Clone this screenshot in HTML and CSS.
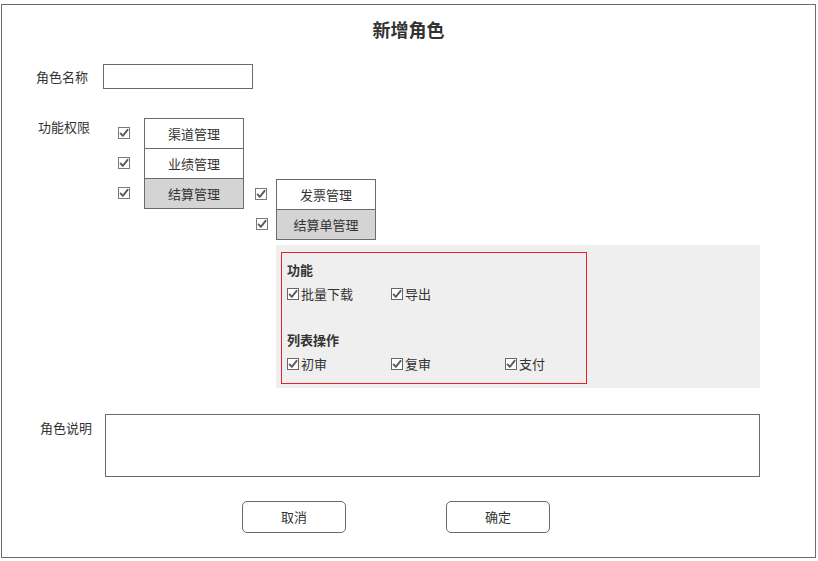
FILE: index.html
```html
<!DOCTYPE html>
<html lang="zh">
<head>
<meta charset="utf-8">
<title>新增角色</title>
<link rel="stylesheet" href="styles.css">
</head>
<body>
<div class="frame">
  <div class="title">新增角色</div>

  <div class="name-row">
    <span class="label label-name">角色名称</span>
    <div class="input"></div>
  </div>

  <div class="perm-row">
    <span class="label label-perm">功能权限</span>
    <div class="level1">
      <div class="item"><svg class="cb" viewBox="0 0 12 12"><rect x="0.5" y="0.5" width="11" height="11"/><path d="M2.6 6.4 L4.8 8.8 L9.6 2.8"/></svg><div class="menu">渠道管理</div></div>
      <div class="item"><svg class="cb" viewBox="0 0 12 12"><rect x="0.5" y="0.5" width="11" height="11"/><path d="M2.6 6.4 L4.8 8.8 L9.6 2.8"/></svg><div class="menu">业绩管理</div></div>
      <div class="item"><svg class="cb" viewBox="0 0 12 12"><rect x="0.5" y="0.5" width="11" height="11"/><path d="M2.6 6.4 L4.8 8.8 L9.6 2.8"/></svg><div class="menu active">结算管理</div></div>
    </div>
    <div class="level2">
      <div class="item"><svg class="cb" viewBox="0 0 12 12"><rect x="0.5" y="0.5" width="11" height="11"/><path d="M2.6 6.4 L4.8 8.8 L9.6 2.8"/></svg><div class="menu">发票管理</div></div>
      <div class="item"><svg class="cb cb2" viewBox="0 0 12 12"><rect x="0.5" y="0.5" width="11" height="11"/><path d="M2.6 6.4 L4.8 8.8 L9.6 2.8"/></svg><div class="menu active">结算单管理</div></div>
      <div class="panel">
        <div class="redbox">
          <div class="group-title">功能</div>
          <div class="opts">
            <label class="opt"><svg class="cb" viewBox="0 0 12 12"><rect x="0.5" y="0.5" width="11" height="11"/><path d="M2.6 6.4 L4.8 8.8 L9.6 2.8"/></svg>批量下载</label>
            <label class="opt"><svg class="cb" viewBox="0 0 12 12"><rect x="0.5" y="0.5" width="11" height="11"/><path d="M2.6 6.4 L4.8 8.8 L9.6 2.8"/></svg>导出</label>
          </div>
          <div class="group-title second">列表操作</div>
          <div class="opts">
            <label class="opt"><svg class="cb" viewBox="0 0 12 12"><rect x="0.5" y="0.5" width="11" height="11"/><path d="M2.6 6.4 L4.8 8.8 L9.6 2.8"/></svg>初审</label>
            <label class="opt"><svg class="cb" viewBox="0 0 12 12"><rect x="0.5" y="0.5" width="11" height="11"/><path d="M2.6 6.4 L4.8 8.8 L9.6 2.8"/></svg>复审</label>
            <label class="opt"><svg class="cb" viewBox="0 0 12 12"><rect x="0.5" y="0.5" width="11" height="11"/><path d="M2.6 6.4 L4.8 8.8 L9.6 2.8"/></svg>支付</label>
          </div>
        </div>
      </div>
    </div>
  </div>

  <div class="desc-row">
    <span class="label label-desc">角色说明</span>
    <div class="textarea"></div>
  </div>

  <div class="buttons">
    <div class="btn">取消</div>
    <div class="btn">确定</div>
  </div>
</div>
</body>
</html>
```

FILE: styles.css
```css
* { box-sizing: border-box; }

html, body {
  margin: 0;
  padding: 0;
  background: #fff;
}

body {
  font-family: "Noto Sans CJK SC", "Noto Sans", sans-serif;
  font-size: 13px;
  color: #333;
}

.frame {
  margin: 4px 0 0 1px;
  width: 815px;
  height: 554px;
  border: 1px solid #6b6b6b;
}

.title {
  margin-top: 12px;
  height: 24px;
  line-height: 24px;
  text-align: center;
  font-size: 18px;
  font-weight: bold;
  color: #333;
}

.label {
  line-height: 18px;
  white-space: nowrap;
}

.name-row {
  display: flex;
  align-items: center;
  margin-top: 23px;
  height: 25px;
}

.label-name {
  margin-left: 34px;
  width: 52px;
}

.input {
  margin-left: 15px;
  width: 150px;
  height: 25px;
  border: 1px solid #6b6b6b;
  background: #fff;
}

.perm-row {
  display: flex;
  align-items: flex-start;
  margin-top: 29px;
}

.label-perm {
  margin-left: 36px;
  width: 80px;
}

.item {
  display: flex;
  align-items: center;
}

.item + .item {
  margin-top: -1px;
}

.cb {
  width: 12px;
  height: 12px;
  flex: none;
  display: block;
}

.cb rect {
  fill: #fff;
  stroke: #7a7a7a;
  stroke-width: 1;
}

.cb path {
  fill: none;
  stroke: #5a5a5a;
  stroke-width: 1.9;
  stroke-linecap: round;
  stroke-linejoin: round;
}

.level1 .cb {
  margin-top: -2px;
}

.menu {
  width: 100px;
  height: 31px;
  border: 1px solid #6b6b6b;
  background: #fff;
  text-align: center;
  line-height: 29px;
  color: #333;
}

.menu.active {
  background: #d4d4d4;
}

.level1 .menu {
  margin-left: 14px;
}

.level2 {
  margin-left: 11px;
  margin-top: 61px;
}

.level2 .menu {
  margin-left: 9px;
}

.level2 .cb {
  margin-top: -1px;
}

.level2 .cb2 {
  margin-left: 1px;
  margin-right: -1px;
}

.panel {
  margin: 5px 0 0 21px;
  width: 484px;
  height: 143px;
  background: #efefef;
  padding: 7px 0 0 5px;
}

.redbox {
  width: 306px;
  height: 132px;
  border: 1px solid #e3232c;
  padding: 8px 0 0 5px;
}

.group-title {
  font-weight: bold;
  line-height: 18px;
  color: #333;
}

.group-title.second {
  margin-top: 28px;
}

.opts {
  display: grid;
  grid-template-columns: 104px 114px 1fr;
  margin-top: 6px;
}

.opt {
  display: flex;
  align-items: center;
  gap: 2px;
  line-height: 18px;
  white-space: nowrap;
}

.opt .cb rect {
  stroke: #666;
}

.desc-row {
  display: flex;
  align-items: flex-start;
  margin-top: 26px;
}

.label-desc {
  margin-left: 38px;
  width: 52px;
  margin-top: 5px;
}

.textarea {
  margin-left: 13px;
  width: 655px;
  height: 63px;
  border: 1px solid #6b6b6b;
  background: #fff;
}

.buttons {
  display: flex;
  margin-top: 24px;
  padding-left: 240px;
  gap: 100px;
}

.btn {
  width: 104px;
  height: 32px;
  border: 1px solid #6b6b6b;
  border-radius: 5px;
  text-align: center;
  line-height: 30px;
  color: #333;
  background: #fff;
}
```
